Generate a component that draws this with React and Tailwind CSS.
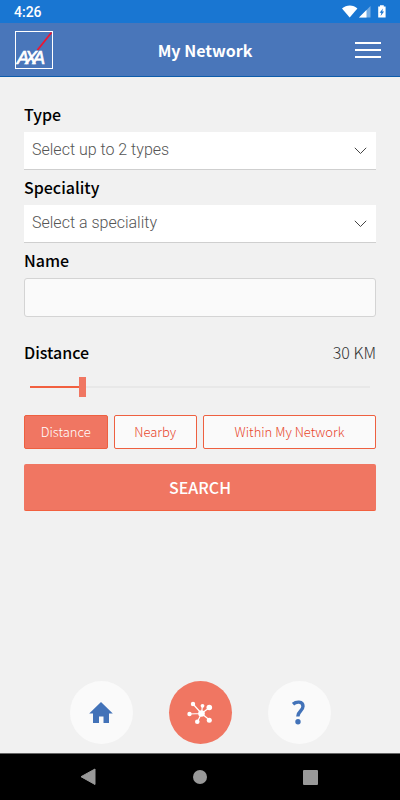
import { useState } from 'react'

const modes = [
  { id: 'distance', label: 'Distance', span: 'col-span-1' },
  { id: 'nearby', label: 'Nearby', span: 'col-span-1' },
  { id: 'network', label: 'Within My Network', span: 'col-span-2' },
]

const MIN_KM = 1
const MAX_KM = 200

function StatusBar() {
  return (
    <div className="flex h-[23px] items-center justify-between bg-[#1976d2] pl-3.5 pr-3 font-[Roboto,sans-serif] text-sm font-medium text-white">
      <span>4:26</span>
      <svg width="46" height="14" viewBox="0 0 46 14" fill="#fff" aria-hidden="true">
        <path d="M0 3.6C4.4-.4 11.400-.4 15.400 3.600L7.700 12.500z" />
        <path d="M28.500 1v11.500H17z" opacity=".4" />
        <path d="M24.500 5v7.500H17z" />
        <path fillRule="evenodd" d="M36.200 1.400h1.800V.3h3.800v1.100h1.800v11.200h-7.400zM41 3.400l-3.400 4.400h1.800l-.8 3.200 3.500-4.500h-1.900z" />
      </svg>
    </div>
  )
}

function Logo() {
  return (
    <svg width="38" height="38" viewBox="0 0 38 38" role="img" aria-label="AXA">
      <rect x=".5" y=".5" width="37" height="37" fill="none" stroke="#fff" />
      <path d="M36.500 1.500L22.500 19" stroke="#f0142f" strokeWidth="1.800" />
      <text x="2 10 18" y="33" fill="#fff" stroke="#fff" strokeWidth=".7" fontFamily="Liberation Sans, sans-serif" fontSize="18" fontStyle="italic">AXA</text>
    </svg>
  )
}

function Header() {
  return (
    <header className="grid h-[54px] grid-cols-[auto_1fr_auto] items-center border-b border-[#0d5cab] bg-[#4976ba] pl-[15px] pr-[19px]">
      <Logo />
      <h1 className="pl-0.5 text-center text-base font-bold text-white">My Network</h1>
      <button type="button" aria-label="Menu" className="flex flex-col gap-[5px]">
        <span className="block h-0.5 w-[26px] bg-white" />
        <span className="block h-0.5 w-[26px] bg-white" />
        <span className="block h-0.5 w-[26px] bg-white" />
      </button>
    </header>
  )
}

function SelectField({ id, label, placeholder }) {
  return (
    <div>
      <label htmlFor={id} className="block h-[35px] text-base leading-[35px] font-medium">{label}</label>
      <div className="relative">
        <select id={id} className="block h-[38px] w-full appearance-none border-b border-[#cfcfcf] bg-white pb-0.5 pl-2 pr-8 font-[Roboto,sans-serif] text-base font-light text-[#555] outline-none">
          <option>{placeholder}</option>
        </select>
        <svg className="pointer-events-none absolute top-[15px] right-[9px]" width="13" height="8" viewBox="0 0 13 8" fill="none" stroke="#444" aria-hidden="true">
          <path d="M.8.8l5.700 5.700L12.200.8" />
        </svg>
      </div>
    </div>
  )
}

function HomeIcon() {
  return (
    <svg width="24" height="22" viewBox="0 0 24 22" fill="#4272b8" aria-hidden="true">
      <path d="M12 0l11.800 11.500H20V21h-5.500v-6.500h-4.500V21H4v-9.500H.2z" />
    </svg>
  )
}

function NetworkIcon() {
  return (
    <svg width="26" height="24" viewBox="0 0 26 24" fill="#fff" stroke="#fff" strokeWidth="1.200" aria-hidden="true">
      <path d="M14.500 12.500L6 3M14.500 12.500l1-8M14.500 12.500l8-6M14.500 12.500L2.500 13M14.500 12.500l-4 8M14.500 12.500l8 6.500" />
      <g stroke="none">
        <circle cx="14.500" cy="12.500" r="3.300" />
        <circle cx="6" cy="3" r="2.200" />
        <circle cx="15.500" cy="4.800" r="1.900" />
        <circle cx="22.300" cy="6.500" r="2.800" />
        <circle cx="2.500" cy="13" r="2.200" />
        <circle cx="10.300" cy="20.700" r="2.300" />
        <circle cx="22.300" cy="19.200" r="2.500" />
      </g>
    </svg>
  )
}

function HelpIcon() {
  return (
    <svg width="14" height="25" viewBox="0 0 14 25" fill="none" stroke="#4272b8" aria-hidden="true">
      <path d="M1 4.200C4 1.500 11 .8 11 6.300C11 11 5.800 11 5.800 16.500" strokeWidth="3.400" />
      <circle cx="6" cy="21.700" r="2.700" fill="#4272b8" stroke="none" />
    </svg>
  )
}

function TabBar() {
  return (
    <nav className="flex justify-center gap-9 pb-[9px]">
      <a href="#home" aria-label="Home" className="flex size-[63px] items-center justify-center rounded-full bg-[#fafafa]"><HomeIcon /></a>
      <a href="#network" aria-label="My Network" aria-current="page" className="flex size-[63px] items-center justify-center rounded-full bg-[#f07662]"><NetworkIcon /></a>
      <a href="#help" aria-label="Help" className="flex size-[63px] items-center justify-center rounded-full bg-[#fafafa]"><HelpIcon /></a>
    </nav>
  )
}

function SystemBar() {
  return (
    <div className="grid h-[47px] grid-cols-[1fr_auto_1fr] items-center border-t border-[#666] bg-black px-20">
      <button type="button" aria-label="Back">
        <svg width="16" height="18" viewBox="0 0 16 18" fill="#999"><path d="M15 1v15.500L1 8.700z" stroke="#999" strokeLinejoin="round" /></svg>
      </button>
      <button type="button" aria-label="Home" className="size-3.5 rounded-full bg-[#999]" />
      <button type="button" aria-label="Recent apps" className="mr-0.5 size-[15px] justify-self-end rounded-[1px] bg-[#999]" />
    </div>
  )
}

export default function App() {
  const [km, setKm] = useState(30)
  const [mode, setMode] = useState('distance')
  const filled = ((km - MIN_KM) / (MAX_KM - MIN_KM)) * 100

  return (
    <div className="flex min-h-screen flex-col bg-[#f1f1f1] font-['Noto_Sans_CJK_SC',sans-serif] text-black">
      <StatusBar />
      <Header />
      <main className="flex-1 px-6 pt-5">
        <form onSubmit={(e) => e.preventDefault()}>
          <SelectField id="type" label="Type" placeholder="Select up to 2 types" />
          <SelectField id="speciality" label="Speciality" placeholder="Select a speciality" />

          <label htmlFor="name" className="block h-[35px] text-base leading-[35px] font-medium">Name</label>
          <input id="name" type="text" className="block h-[39px] w-full rounded-[3px] border border-[#d4d4d4] bg-[#fafafa] px-2 text-base outline-none" />

          <div className="mt-[17px] flex h-[35px] items-center justify-between text-base">
            <label htmlFor="distance" className="font-medium">Distance</label>
            <output htmlFor="distance" className="font-light text-[#333]">{km} KM</output>
          </div>
          <div className="px-1.5 pt-2">
            <input
              id="distance"
              type="range"
              min={MIN_KM}
              max={MAX_KM}
              value={km}
              onChange={(e) => setKm(Number(e.target.value))}
              style={{ backgroundImage: `linear-gradient(to right, #f2603f ${filled}%, #e8e8e8 ${filled}%)` }}
              className="block h-5 w-full appearance-none bg-transparent bg-[length:100%_2px] bg-center bg-no-repeat outline-none [&::-webkit-slider-thumb]:h-5 [&::-webkit-slider-thumb]:w-[7px] [&::-webkit-slider-thumb]:appearance-none [&::-webkit-slider-thumb]:bg-[#f07662]"
            />
          </div>

          <div className="mt-[18px] grid grid-cols-4 gap-1.5">
            {modes.map(({ id, label, span }) => (
              <button
                key={id}
                type="button"
                aria-pressed={mode === id}
                onClick={() => setMode(id)}
                className={`${span} h-[34px] rounded-[2px] border border-[#ee6040] text-[13px] font-light ${
                  mode === id ? 'bg-[#f07662] text-white' : 'bg-[#fafafa] text-[#e8452a]'
                }`}
              >
                {label}
              </button>
            ))}
          </div>
          <button type="submit" className="mt-[15px] block h-[47px] w-full rounded-[2px] border-b border-[#f2603f] bg-[#f07662] text-base font-medium text-white">SEARCH</button>
        </form>
      </main>
      <TabBar />
      <SystemBar />
    </div>
  )
}
